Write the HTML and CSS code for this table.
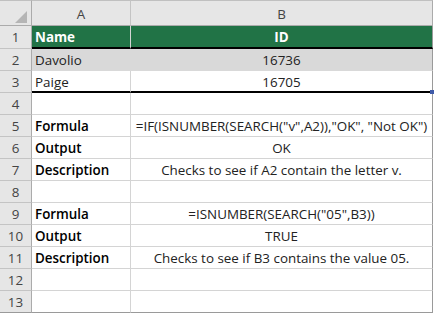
FILE: index.html
```html
<!DOCTYPE html>
<html lang="en">
  <head>
    <meta charset="UTF-8" />
    <meta name="viewport" content="width=device-width, initial-scale=1.0" />
    <title>SEARCH example</title>
    <link rel="stylesheet" href="styles.css">
  </head>
  <body>
    <div class="sheet">
      <!-- column headers -->
      <div class="corner"><span class="tri"></span></div>
      <div class="colhead">A</div>
      <div class="colhead">B</div>

      <!-- row 1 -->
      <div class="rowhead r1">1</div>
      <div class="cell title left thick">Name</div>
      <div class="cell title thick">ID</div>

      <div class="rowhead">2</div>
      <div class="cell shade left">Davolio</div>
      <div class="cell shade">16736</div>

      <div class="rowhead r3">3</div>
      <div class="cell left thick">Paige</div>
      <div class="cell thick last">16705<span class="handle"></span></div>

      <div class="rowhead">4</div>
      <div class="cell left"></div>
      <div class="cell"></div>

      <div class="rowhead">5</div>
      <div class="cell left label">Formula</div>
      <div class="cell">=IF(ISNUMBER(SEARCH("v",A2)),"OK", "Not OK")</div>

      <div class="rowhead">6</div>
      <div class="cell left label">Output</div>
      <div class="cell">OK</div>

      <div class="rowhead">7</div>
      <div class="cell left label">Description</div>
      <div class="cell">Checks to see if A2 contain the letter v.</div>

      <div class="rowhead">8</div>
      <div class="cell left"></div>
      <div class="cell"></div>

      <div class="rowhead">9</div>
      <div class="cell left label">Formula</div>
      <div class="cell">=ISNUMBER(SEARCH("05",B3))</div>

      <div class="rowhead">10</div>
      <div class="cell left label">Output</div>
      <div class="cell">TRUE</div>

      <div class="rowhead">11</div>
      <div class="cell left label">Description</div>
      <div class="cell">Checks to see if B3 contains the value 05.</div>

      <div class="rowhead">12</div>
      <div class="cell left"></div>
      <div class="cell"></div>

      <div class="rowhead bottom">13</div>
      <div class="cell left bottom"></div>
      <div class="cell bottom"></div>
    </div>
  </body>
</html>
```

FILE: styles.css
```css
body {
  margin: 0;
  background: #ffffff;
  font-family: "Open Sans", "Noto Sans", arial, sans-serif;
  font-size: 13.4px;
  color: #222222;
}
.sheet {
  display: grid;
  grid-template-columns: 32px 99px 302px;
  grid-template-rows: 26px 23px 22px 22px repeat(10, 22px);
  width: 433px;
}
.corner,
.colhead,
.rowhead {
  background: #e6e6e6;
  color: #444444;
  display: flex;
  align-items: center;
  justify-content: center;
  border-right: 1px solid #ababab;
  border-bottom: 1px solid #c4c4c4;
}
.corner,
.colhead {
  border-top: 1px solid #c0c0c0;
  border-bottom: 1px solid #ababab;
  padding-top: 1px;
}
.colhead {
  border-right-color: #c4c4c4;
}
.colhead:nth-child(3) {
  border-right-color: #ababab;
}
.corner {
  position: relative;
}
.tri {
  position: absolute;
  right: 4px;
  bottom: 2px;
  width: 0;
  height: 0;
  border-left: 12px solid transparent;
  border-bottom: 12px solid #b5b5b5;
}
.rowhead.bottom {
  border-bottom-color: #9a9a9a;
}
.cell {
  display: flex;
  align-items: center;
  justify-content: center;
  white-space: nowrap;
  padding-top: 1px;
  border-right: 1px solid #d4d4d4;
  border-bottom: 1px solid #d4d4d4;
}
.cell:nth-child(3n) {
  border-right-color: #9a9a9a;
}
.cell.left {
  justify-content: flex-start;
  padding-left: 3px;
}
.cell.bottom {
  border-bottom-color: #9a9a9a;
}
.title {
  background: #217346;
  color: #ffffff;
  font-weight: 700;
}
.shade {
  background: #d9d9d9;
  border-bottom-color: #d9d9d9;
  border-right-color: #d9d9d9;
}
.shade:nth-child(3n) {
  border-right-color: #9a9a9a;
}
.thick {
  border-bottom: 2px solid #000000;
}
.label {
  color: #000000;
  font-weight: 600;
}
.last {
  position: relative;
}
.handle {
  position: absolute;
  right: -2px;
  bottom: -3px;
  width: 4px;
  height: 4px;
  background: #3f5aa8;
}
```
